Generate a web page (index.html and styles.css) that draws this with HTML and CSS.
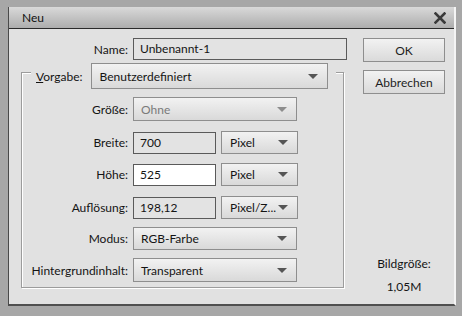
FILE: index.html
```html
<!DOCTYPE html>
<html>
<head>
<meta charset="utf-8">
<link rel="stylesheet" href="styles.css">
</head>
<body>
<div class="frame">
  <div class="dialog">
    <div class="titlebar">
      <span class="title">Neu</span>
      <svg class="close" width="12" height="12" viewBox="0 0 12 12"><path d="M1.5 1.5 L10.5 10.5 M10.5 1.5 L1.5 10.5" stroke="#3a3a3a" stroke-width="2.6" stroke-linecap="square"/></svg>
    </div>
    <div class="content">
      <div class="left">
        <div class="row name-row">
          <label class="lbl">Name:</label>
          <div class="input wide">Unbenannt-1</div>
        </div>
        <div class="group">
          <div class="group-head">
            <span class="lbl-v"><u>V</u>orgabe:</span>
            <div class="select preset"><span>Benutzerdefiniert</span><i class="arrow"></i></div>
          </div>
          <div class="row r-size">
            <label class="lbl">Größe:</label>
            <div class="select mid disabled"><span>Ohne</span><i class="arrow"></i></div>
          </div>
          <div class="row r-w">
            <label class="lbl">Breite:</label>
            <div class="input short">700</div>
            <div class="select unit"><span>Pixel</span><i class="arrow"></i></div>
          </div>
          <div class="row r-h">
            <label class="lbl">Höhe:</label>
            <div class="input short white">525</div>
            <div class="select unit"><span>Pixel</span><i class="arrow"></i></div>
          </div>
          <div class="row r-res">
            <label class="lbl">Auflösung:</label>
            <div class="input short">198,12</div>
            <div class="select unit"><span>Pixel/Z...</span><i class="arrow"></i></div>
          </div>
          <div class="row r-mode">
            <label class="lbl">Modus:</label>
            <div class="select mid"><span>RGB-Farbe</span><i class="arrow"></i></div>
          </div>
          <div class="row r-bg">
            <label class="lbl">Hintergrundinhalt:</label>
            <div class="select mid"><span>Transparent</span><i class="arrow"></i></div>
          </div>
        </div>
      </div>
      <div class="right">
        <button class="btn">OK</button>
        <button class="btn">Abbrechen</button>
        <div class="size">
          <div>Bildgröße:</div>
          <div class="size-val">1,05M</div>
        </div>
      </div>
    </div>
  </div>
</div>
</body>
</html>
```
FILE: styles.css
```css
* { box-sizing: border-box; }
html, body { margin: 0; padding: 0; }
body {
  width: 462px; height: 316px; overflow: hidden;
  font-family: "Lato", "Open Sans", sans-serif;
  font-size: 12px; color: #141414;
}
.frame {
  width: 462px; height: 316px;
  background: #a7a7a7;
  padding: 7px 6px 10px 8px;
}
.dialog {
  height: 100%;
  background: #e1e1e1;
  border-left: 1px solid #4a4a4a;
  border-bottom: 2px solid #4f4f4f;
  border-right: 2px solid #f4f4f4;
  display: flex; flex-direction: column;
}
.titlebar {
  height: 22px;
  background: linear-gradient(#d9d9d9, #adadad);
  border-bottom: 1px solid #2a2a2a;
  display: flex; align-items: center; justify-content: space-between;
  padding: 0 8px 0 13px;
  flex: none;
}
.title { font-size: 12px; color: #111; }
.close { display: block; }
.content {
  flex: 1;
  display: flex;
  padding: 9px 0 0 12px;
}
.left { width: 326px; display: flex; flex-direction: column; }
.row { display: flex; align-items: center; gap: 5px; flex: none; }
.name-row { height: 22px; }
.lbl { width: 104px; text-align: right; }
.name-row .lbl { width: 107px; }
.input {
  height: 22px; line-height: 20px;
  border: 1px solid #5a5a5a;
  background: #e3e3e3;
  padding: 0 6px;
}
.input.wide { width: 214px; }
.input.short { width: 83px; }
.input.white { background: #fff; }
.select {
  height: 23px;
  border: 1px solid #8e8e8e;
  background: linear-gradient(#f2f2f2, #d9d9d9);
  display: flex; align-items: center; justify-content: space-between;
  padding: 0 9px 0 7px;
}
.select.mid { width: 164px; }
.select.unit { width: 77px; padding-left: 8px; }
.select.preset { width: 237px; height: 26px; padding-left: 8px; padding-right: 9px; }
.select.disabled { color: #7a7a7a; }
.arrow {
  display: block; width: 0; height: 0;
  border-left: 5px solid transparent; border-right: 5px solid transparent;
  border-top: 5px solid #555;
}
.disabled .arrow { border-top-color: #8d8d8d; }
.group {
  margin-top: 12px;
  width: 323px; height: 216px;
  border: 1px solid #9c9c9c;
  box-shadow: inset 1px 1px 0 #fff, 1px 1px 0 #fff;
  padding: 0 0 0 2px;
  display: flex; flex-direction: column;
}
.group-head {
  align-self: flex-start;
  margin: -10px 0 0 7px;
  padding: 0 8px 0 5px;
  background: #e1e1e1;
  display: flex; align-items: center; gap: 8px;
}
.lbl-v u { text-decoration: underline; }
.r-size { margin-top: 8px; }
.r-size .select { height: 24px; }
.r-w { margin-top: 10px; }
.r-h { margin-top: 9px; }
.r-res { margin-top: 10px; }
.r-mode { margin-top: 8px; }
.r-bg { margin-top: 8px; }
.r-bg .select { height: 24px; }
.right {
  width: 82px; margin-left: 16px;
  display: flex; flex-direction: column; align-items: stretch;
}
.btn {
  font-family: inherit; font-size: 12px; color: #1e1e1e;
  height: 24px; margin: 0 0 8px 0; padding: 0;
  border: 1px solid #8e8e8e;
  background: linear-gradient(#f2f2f2, #dadada);
}
.size { margin-top: auto; margin-bottom: 10px; text-align: center; }
.size-val { margin-top: 8px; }
```
